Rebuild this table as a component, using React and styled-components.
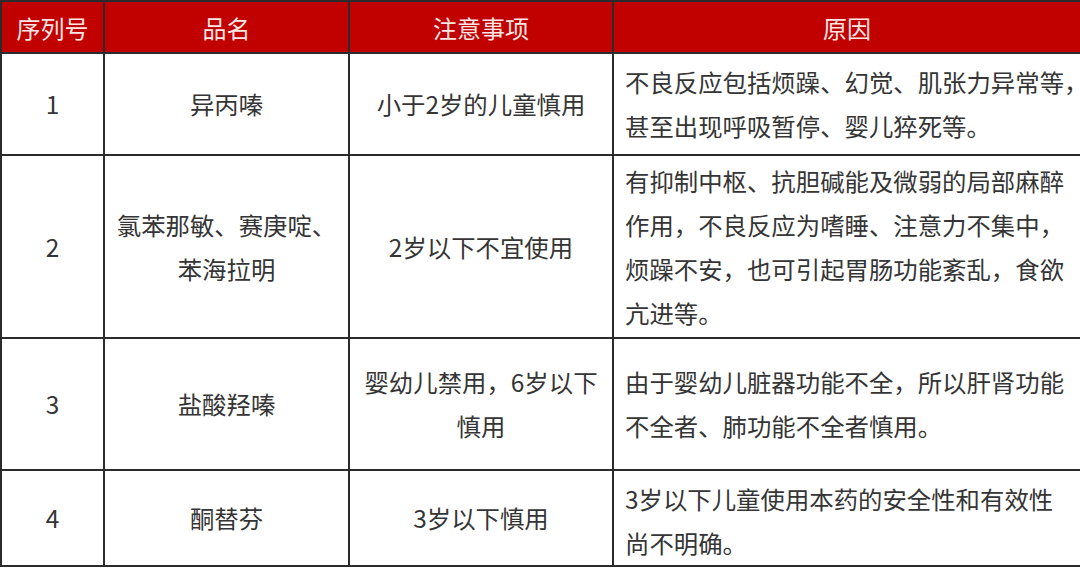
import * as React from 'react';
import styled, { createGlobalStyle } from 'styled-components';

const GlobalStyle = createGlobalStyle`
  html, body {
    margin: 0;
    padding: 0;
    background: #fff;
  }
  body {
    font-family: "Noto Sans CJK SC", "Noto Sans", sans-serif;
  }
`;

const Table = styled.table`
  width: 1080px;
  table-layout: fixed;
  border-collapse: collapse;
  color: #353535;
  font-size: 24.4px;
`;

const HeadCell = styled.th`
  height: 50px;
  padding: 0;
  background: #c10000;
  color: #fde6e3;
  font-weight: 400;
  font-size: 24px;
  text-align: center;
  vertical-align: middle;
  border: 2px solid #2b2b2b;
`;

const Row = styled.tr`
  height: ${props => props.height}px;
`;

const Cell = styled.td`
  padding: 0 6px;
  text-align: center;
  vertical-align: middle;
  line-height: 44px;
  white-space: nowrap;
  border: 2px solid #2b2b2b;
  overflow: hidden;
`;

const ReasonCell = styled(Cell)`
  padding: ${props => props.pad || '0'} 0 0 11px;
  text-align: left;
`;

const rows = [
  {
    no: '1',
    name: ['异丙嗪'],
    note: ['小于2岁的儿童慎用'],
    reason: ['不良反应包括烦躁、幻觉、肌张力异常等，', '甚至出现呼吸暂停、婴儿猝死等。'],
    height: 102
  },
  {
    no: '2',
    name: ['氯苯那敏、赛庚啶、', '苯海拉明'],
    note: ['2岁以下不宜使用'],
    reason: [
      '有抑制中枢、抗胆碱能及微弱的局部麻醉',
      '作用，不良反应为嗜睡、注意力不集中，',
      '烦躁不安，也可引起胃肠功能紊乱，食欲',
      '亢进等。'
    ],
    height: 183
  },
  {
    no: '3',
    name: ['盐酸羟嗪'],
    note: ['婴幼儿禁用，6岁以下', '慎用'],
    reason: ['由于婴幼儿脏器功能不全，所以肝肾功能', '不全者、肺功能不全者慎用。'],
    height: 132
  },
  {
    no: '4',
    name: ['酮替芬'],
    note: ['3岁以下慎用'],
    reason: ['3岁以下儿童使用本药的安全性和有效性', '尚不明确。'],
    height: 96,
    pad: '6px'
  }
];

const lines = list =>
  list.map((line, i) => (
    <React.Fragment key={i}>
      {i > 0 && <br />}
      {line}
    </React.Fragment>
  ));

export default function App() {
  return (
    <>
      <GlobalStyle />
      <Table>
        <colgroup>
          <col style={{ width: 103 }} />
          <col style={{ width: 245 }} />
          <col style={{ width: 264 }} />
          <col style={{ width: 468 }} />
        </colgroup>
        <thead>
          <tr>
            <HeadCell>序列号</HeadCell>
            <HeadCell>品名</HeadCell>
            <HeadCell>注意事项</HeadCell>
            <HeadCell>原因</HeadCell>
          </tr>
        </thead>
        <tbody>
          {rows.map(row => (
            <Row key={row.no} height={row.height}>
              <Cell>{row.no}</Cell>
              <Cell>{lines(row.name)}</Cell>
              <Cell>{lines(row.note)}</Cell>
              <ReasonCell pad={row.pad}>{lines(row.reason)}</ReasonCell>
            </Row>
          ))}
        </tbody>
      </Table>
    </>
  );
}
